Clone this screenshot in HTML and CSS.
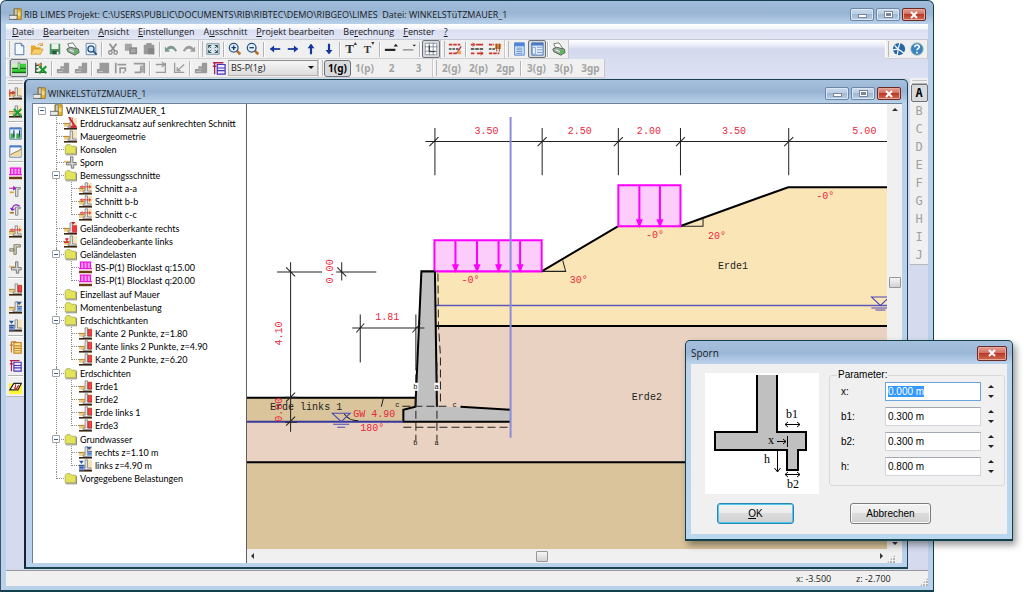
FILE: index.html
```html
<!DOCTYPE html>
<html lang="de">
<head>
<meta charset="utf-8">
<title>RIB LIMES</title>
<link rel="stylesheet" href="styles.css">
</head>
<body>
<svg class="defs" aria-hidden="true">
  <symbol id="app" viewBox="0 0 16 16"><path d="M6 1h9v13H6z" fill="#e9b62c" stroke="#8a6a10"/><path d="M7 1h3v9H7z" fill="#d8d8d8" stroke="#555" stroke-width=".7"/><path d="M0 9h10v5H0z" fill="#e8e8e8" stroke="#555"/><path d="M11 5h3v5h-3z" fill="#f7dc7a"/></symbol>
  <symbol id="new" viewBox="0 0 16 16"><path d="M3.500 1.500h7l3 3v10h-10z" fill="#f4f9ff" stroke="#4a6a96"/><path d="M10.500 1.500v3h3" fill="#cfe0f5" stroke="#4a6a96"/></symbol>
  <symbol id="open" viewBox="0 0 16 16"><path d="M1 4h5l1 2h5v2H5l-3 6H1z" fill="#e8a92a"/><path d="M4 8h11l-3 6H1z" fill="#f7cf6b" stroke="#c98a1a" stroke-width=".7"/><path d="M9 4c1-3 4-3 5 0M14 1v3h-3" fill="none" stroke="#d48a1c"/></symbol>
  <symbol id="save" viewBox="0 0 16 16"><path d="M2 2h12v12H2z" fill="#4b9361"/><path d="M4 2h8v6H4z" fill="#e8f4ea"/><path d="M5 10h7v4H5z" fill="#245c38"/><path d="M10 11h2v3h-2z" fill="#fff"/></symbol>
  <symbol id="print" viewBox="0 0 16 16"><path d="M2 2l6-1 4 6-7 2z" fill="#fff" stroke="#60786a"/><path d="M1 8l4-2 9 2 1 4-5 3-8-4z" fill="#9aaea0" stroke="#43584b"/><circle cx="11" cy="11" r="2.500" fill="#58b858"/><path d="M4 9l5 2" stroke="#fff"/></symbol>
  <symbol id="preview" viewBox="0 0 16 16"><path d="M2.500 1.500h9l2 2v11h-11z" fill="#f2f7fd" stroke="#5c7da6"/><circle cx="8" cy="8" r="3.500" fill="#cfe6fa" stroke="#24527f" stroke-width="1.500"/><path d="M10.500 10.500l4 4" stroke="#24527f" stroke-width="2"/></symbol>
  <symbol id="cut" viewBox="0 0 16 16"><path d="M4 2l6 8M12 2L6 10" stroke="#8f8f8f" stroke-width="2"/><circle cx="5" cy="12" r="2" fill="none" stroke="#8f8f8f" stroke-width="1.500"/><circle cx="11" cy="12" r="2" fill="none" stroke="#8f8f8f" stroke-width="1.500"/></symbol>
  <symbol id="copy" viewBox="0 0 16 16"><path d="M1 2h8v8H1z" fill="#a5a5a5"/><path d="M6 6h9v8H6z" fill="#8f8f8f"/><path d="M8 9h5M8 11h5" stroke="#bbb"/></symbol>
  <symbol id="paste" viewBox="0 0 16 16"><path d="M2 3h12v11H2zM5 1h6v3H5z" fill="#999"/><path d="M7 7h7v7H7z" fill="#858585"/></symbol>
  <symbol id="undo" viewBox="0 0 16 16"><path d="M1 11V5l2 2c4-5 9-3 12 3l-2 1c-3-4-5-4-8-2l2 2z" fill="#7f9a8c"/></symbol>
  <symbol id="redo" viewBox="0 0 16 16"><path d="M15 11V5l-2 2C9 2 4 4 1 10l2 1c3-4 5-4 8-2l-2 2z" fill="#9c9c9c"/></symbol>
  <symbol id="fit" viewBox="0 0 16 16"><path d="M1 2h14v12H1z" fill="#dce9ef" stroke="#6f8a98"/><path d="M6 7L3 4m0 3V4h3M10 7l3-3m0 3V4h-3M6 9l-3 3m0-3v3h3M10 9l3 3m0-3v3h-3" stroke="#1f3a48" fill="none"/></symbol>
  <symbol id="zin" viewBox="0 0 16 16"><path d="M9 9l5 5" stroke="#b9702c" stroke-width="3"/><circle cx="6.500" cy="6.500" r="5" fill="#e4f1fb" stroke="#2b5688" stroke-width="1.500"/><path d="M4 6.500h5M6.500 4v5" stroke="#123c78" stroke-width="1.500"/></symbol>
  <symbol id="zout" viewBox="0 0 16 16"><path d="M9 9l5 5" stroke="#b9702c" stroke-width="3"/><circle cx="6.500" cy="6.500" r="5" fill="#e4f1fb" stroke="#2b5688" stroke-width="1.500"/><path d="M4 6.500h5" stroke="#123c78" stroke-width="1.500"/></symbol>
  <symbol id="left" viewBox="0 0 16 16"><path d="M3 8h11" stroke="#16389c" stroke-width="2"/><path d="M2 8l5-4v8z" fill="#16389c"/></symbol>
  <symbol id="right" viewBox="0 0 16 16"><path d="M2 8h11" stroke="#16389c" stroke-width="2"/><path d="M14 8L9 4v8z" fill="#16389c"/></symbol>
  <symbol id="up" viewBox="0 0 16 16"><path d="M8 3v11" stroke="#16389c" stroke-width="2.500"/><path d="M8 2l4 5H4z" fill="#16389c"/></symbol>
  <symbol id="down" viewBox="0 0 16 16"><path d="M8 2v11" stroke="#16389c" stroke-width="2.500"/><path d="M8 14l4-5H4z" fill="#16389c"/></symbol>
  <symbol id="thick" viewBox="0 0 16 16"><path d="M1 9h12" stroke="#222" stroke-width="2.500"/><path d="M11 5h5l-2.500-3z" fill="#222"/></symbol>
  <symbol id="thin" viewBox="0 0 16 16"><path d="M1 9h12" stroke="#555"/><path d="M12 3h4l-2 2z" fill="#222"/></symbol>
  <symbol id="grid" viewBox="0 0 16 16"><path d="M1.500 1.500h13v13h-13z" fill="#fff" stroke="#8a97a5"/><path d="M1 5.500h14M1 10.500h14M6 1v14M10.500 1v14" stroke="#7c8894"/><path d="M6 4v7h7" fill="none" stroke="#222"/></symbol>
  <symbol id="red1" viewBox="0 0 16 16"><path d="M1 3h13M1 13h9" stroke="#c8372d" stroke-width="2" stroke-dasharray="4 1"/><path d="M1 8h12" stroke="#444" stroke-width="1.500" stroke-dasharray="3 1"/><path d="M10 13l5-8" stroke="#a33" stroke-width="1.500"/><path d="M11 10h4v4h-4z" fill="#e9a05a"/></symbol>
  <symbol id="red2" viewBox="0 0 16 16"><path d="M1 3h4M7 3h8M1 13h4M8 13h7" stroke="#c8372d" stroke-width="2"/><path d="M1 8h14" stroke="#333" stroke-width="1.500" stroke-dasharray="4 1"/><path d="M3 1l3 2-3 2M12 11l3 2-3 2" fill="none" stroke="#c33"/></symbol>
  <symbol id="red3" viewBox="0 0 16 16"><path d="M1 3h6M1 13h12" stroke="#c8372d" stroke-width="2" stroke-dasharray="4 1"/><path d="M1 8h8" stroke="#444" stroke-width="1.500" stroke-dasharray="3 1"/><path d="M8 2h7v6H8z" fill="#d88d3c"/><path d="M10 2v9M13 2v9" stroke="#8a3a1c"/></symbol>
  <symbol id="list" viewBox="0 0 16 16"><path d="M3 1h11v14H3z" fill="#e2eefc" stroke="#3f74c6"/><path d="M3 1h11v4H3z" fill="#4f86da"/><path d="M5 7h7M5 9h7M5 11h7M5 13h7" stroke="#5b87c5"/></symbol>
  <symbol id="list2" viewBox="0 0 16 16"><path d="M2 1h13v14H2z" fill="#e2eefc" stroke="#3f6ab0"/><path d="M2 1h13v3H2z" fill="#4a78c4"/><path d="M3 6h3v8H3zM8 6h6M8 9h6M8 12h6" fill="#fff" stroke="#7196c8"/></symbol>
  <symbol id="globe" viewBox="0 0 16 16"><circle cx="8" cy="8" r="7" fill="#2566a4"/><path d="M9 1L7 8l7 5M7 8L1 9M3 4l4 4M7 9l-1 6" stroke="#eef6ff" stroke-width="1.500" fill="none"/></symbol>
  <symbol id="help" viewBox="0 0 16 16"><circle cx="8" cy="8" r="7" fill="#3b82c0" stroke="#8aa"/><path d="M5.500 6c0-4 5.500-3 5 0-.3 1.500-2.500 1.500-2.500 3.500M8 11v2" fill="none" stroke="#fff" stroke-width="1.800"/></symbol>
  <symbol id="ground" viewBox="0 0 16 16"><path d="M0 8h16v6H0zM9 3h7v6H9z" fill="#3ccf38"/><path d="M0 3h7v5H0z" fill="#c8f2c0"/><path d="M0 8.500h7M9 8.500h7M0 13h16" stroke="#166516" stroke-width="1.500"/><path d="M7 2h2v8H7z" fill="#e8ffe4" stroke="#1b7a1a" stroke-width=".7"/></symbol>
  <symbol id="gdel" viewBox="0 0 16 16"><path d="M1 13h13M2 2v11M2 5h4M2 9h3M8 2v6" stroke="#3d4b3d" stroke-width="1.500"/><path d="M6 6l8 8M14 6l-8 8" stroke="#1d9b28" stroke-width="2.500"/><path d="M4 4h4" stroke="#e08030" stroke-width="2"/></symbol>
  <symbol id="gray1" viewBox="0 0 16 16"><path d="M1 14V9h4V6h4V2h6v12z" fill="#9a9a9a"/><path d="M3 12h5M6 9h3" stroke="#c9c9c9"/></symbol>
  <symbol id="gray0" viewBox="0 0 16 16"><path d="M1 14V9h3V2h11v12z" fill="#9a9a9a"/><path d="M3 12h5" stroke="#c9c9c9"/></symbol>
  <symbol id="gray2" viewBox="0 0 16 16"><path d="M2 14V2M4 4h10M7 7v7M7 8h6v4M11 12v2" fill="none" stroke="#999" stroke-width="2"/></symbol>
  <symbol id="gray3" viewBox="0 0 16 16"><path d="M2 3h12v11M3 13h7V6" fill="none" stroke="#999" stroke-width="2"/><path d="M10 5h4v8h-4z" fill="#aaa"/></symbol>
  <symbol id="gray4" viewBox="0 0 16 16"><path d="M2 4h9M9 1l3 3-3 3M13 2v11H2" fill="none" stroke="#999" stroke-width="1.500"/></symbol>
  <symbol id="gray5" viewBox="0 0 16 16"><path d="M3 2v11h11M14 4l-8 7M6 7v4h4" fill="none" stroke="#999" stroke-width="1.500"/></symbol>
  <symbol id="tab" viewBox="0 0 16 16"><path d="M6 4h9v11H6zM6 8h9M6 11h9" fill="#ece9ff" stroke="#4a35b0" stroke-width="1.400"/><path d="M1 2h12M3 2v13M1 6h4" stroke="#b02058" stroke-width="1.500"/></symbol>
  <symbol id="wall" viewBox="0 0 16 16"><path d="M10 1h6v12h-6z" fill="#f6e3b8"/><path d="M0 8h8v4H0z" fill="#f0cf86"/><path d="M0 8h7" stroke="#b98a30" stroke-width="1.500"/><path d="M7.500 1h3v10H15v2H5v-2h2.500z" fill="#e2e2e2" stroke="#777" stroke-width=".9"/><path d="M0 14.500h16" stroke="#3a2410" stroke-width="2"/></symbol>
  <symbol id="press" viewBox="0 0 16 16"><use href="#wall"/><path d="M6 0l8 12H8" fill="none" stroke="#d8202a" stroke-width="2.200"/></symbol>
  <symbol id="spur" viewBox="0 0 16 16"><path d="M0 6h7v2H0z" fill="#e0b860"/><path d="M8 1h3v7h4v3h-3v4H9v-4H3V8h5z" fill="#d0d0d0" stroke="#666"/></symbol>
  <symbol id="folder" viewBox="0 0 16 16"><path d="M1.500 4l2-2h4l2 2h5v9h-13z" fill="#e2e456" stroke="#a8a860"/><path d="M2 14.500h13.500V5" fill="none" stroke="#6c6c50"/></symbol>
  <symbol id="cutsec" viewBox="0 0 16 16"><use href="#wall"/><path d="M1 6h14" stroke="#e0312c" stroke-width="1.800" stroke-dasharray="3 1"/><path d="M4 4v4M13 4v4" stroke="#e0312c"/></symbol>
  <symbol id="topr" viewBox="0 0 16 16"><use href="#wall"/><path d="M10 4h6v9h-6z" fill="#ee3540"/><path d="M9 0h5l-2.500 3z" fill="#d01420"/></symbol>
  <symbol id="topl" viewBox="0 0 16 16"><use href="#wall"/><path d="M1 4h5L3.500 8z" fill="#d8202a"/><path d="M0 9h6" stroke="#d8202a" stroke-width="1.500"/></symbol>
  <symbol id="load" viewBox="0 0 16 16"><path d="M1 1h14v8H1z" fill="#ff9cff"/><path d="M1 1.500h14M2 1v8M6 1v8M10 1v8M14 1v8M0 9.500h16" stroke="#e81ad8" stroke-width="1.600"/><path d="M0 13.500h16" stroke="#6a3c14" stroke-width="3"/></symbol>
  <symbol id="layer" viewBox="0 0 16 16"><use href="#wall"/><path d="M11 3h5v8h-5z" fill="#f04444" stroke="#a82020" stroke-width=".7"/></symbol>
  <symbol id="water" viewBox="0 0 16 16"><use href="#wall"/><path d="M10 6h6v7h-6z" fill="#8caedb"/><path d="M9 1h7l-3.500 4z" fill="#2f58a4"/><path d="M10 7h6M11 9.500h4" stroke="#2f58a4"/></symbol>
  <symbol id="waterl" viewBox="0 0 16 16"><use href="#wall"/><path d="M0 7h7v7H0z" fill="#7090cc"/><path d="M0 2h6L3 6z" fill="#2f58a4"/><path d="M0 8h6M1 10.500h4" stroke="#24468c"/></symbol>
  <symbol id="s1" viewBox="0 0 16 16"><use href="#wall"/><path d="M1 3v9M1 7h6M4 5l3 2-3 2" fill="none" stroke="#d83a28" stroke-width="1.400"/></symbol>
  <symbol id="s2" viewBox="0 0 16 16"><use href="#wall"/><path d="M6 5l9 9M15 5l-9 9" stroke="#14a02c" stroke-width="2.500"/></symbol>
  <symbol id="s3" viewBox="0 0 16 16"><path d="M1 1h14v14H1z" fill="#e9f5ff" stroke="#3d68a8"/><path d="M1 2h14" stroke="#4b7ccc" stroke-width="2"/><path d="M2 8h5v6H2zM9 8h5v6H9z" fill="#49aa4b"/><path d="M6 4v8M13 4v8" stroke="#1f4a78" stroke-width="1.500"/></symbol>
  <symbol id="s4" viewBox="0 0 16 16"><path d="M1 1h14v14H1z" fill="#f4f9ff" stroke="#3d68a8"/><path d="M1 2h14" stroke="#4b7ccc" stroke-width="2"/><path d="M2 12l5-3 3-1 5-3v9H2z" fill="#f3dca4"/><path d="M2 12l5-3 3-1 5-3" fill="none" stroke="#87641c"/></symbol>
  <symbol id="s5" viewBox="0 0 16 16"><path d="M8 3h6v2h-3v9H8z" fill="#ddd" stroke="#777"/><path d="M0 4h8M5 2l3 2-3 2" stroke="#a022b0" fill="none" stroke-width="1.500"/><path d="M1 9h5" stroke="#d8a030" stroke-width="2"/></symbol>
  <symbol id="s6" viewBox="0 0 16 16"><path d="M8 5h6v2h-3v8H8z" fill="#ddd" stroke="#777"/><path d="M4 9c0-7 5-8 9-5M4 9L2 6M4 9l3-2" stroke="#8a22c0" fill="none" stroke-width="1.500"/><path d="M1 12h5" stroke="#a87020" stroke-width="2"/></symbol>
  <symbol id="s7" viewBox="0 0 16 16"><path d="M6 2h8v3H9v9H6zM1 7h5v3H1z" fill="#cfcab5" stroke="#787460"/></symbol>
  <symbol id="s8" viewBox="0 0 16 16"><path d="M6 2h9v13H6zM6 6h9M6 9h9M6 12h9" fill="#ffe9a8" stroke="#c88418" stroke-width="1.400"/><path d="M1 5h4M3 1v13M3 1h6" stroke="#c87828" stroke-width="1.500"/></symbol>
  <symbol id="s9" viewBox="0 0 16 16"><path d="M0 3h16v13H0z" fill="#fdf534"/><path d="M1 11L6 3h9l-4 8z" fill="#fff" stroke="#222" stroke-width="1.500"/><path d="M8 4v4M6 8l3 2 3-5" fill="none" stroke="#c33024" stroke-width="1.500"/></symbol>
</svg>

<main class="app">
  <header class="titlebar">
    <svg class="ico"><use href="#app"/></svg>
    <h1 class="caption">RIB LIMES Projekt: C:\USERS\PUBLIC\DOCUMENTS\RIB\RIBTEC\DEMO\RIBGEO\LIMES&nbsp; Datei: WINKELSTüTZMAUER_1</h1>
    <div class="winbtns">
      <button class="win" aria-label="Minimieren"><i class="min"></i></button>
      <button class="win" aria-label="Maximieren"><i class="max"></i></button>
      <button class="win close" aria-label="Schließen"><svg viewBox="0 0 10 8"><path d="M2 1l6 6M8 1L2 7"/></svg></button>
    </div>
  </header>
  <div class="client">
    <nav class="menu">
      <button><u>D</u>atei</button><button><u>B</u>earbeiten</button><button><u>A</u>nsicht</button><button><u>E</u>instellungen</button><button>A<u>u</u>sschnitt</button><button><u>P</u>rojekt bearbeiten</button><button>Be<u>r</u>echnung</button><button><u>F</u>enster</button><button><u>?</u></button>
    </nav>
    <div class="bars">
      <div class="bar">
        <div class="group"><span class="grip"></span>
          <button class="tb" aria-label="Neu"><svg><use href="#new"/></svg></button><button class="tb" aria-label="Öffnen"><svg><use href="#open"/></svg></button><button class="tb" aria-label="Speichern"><svg><use href="#save"/></svg></button><button class="tb" aria-label="Drucken"><svg><use href="#print"/></svg></button><button class="tb" aria-label="Vorschau"><svg><use href="#preview"/></svg></button><span class="sep"></span>
          <button class="tb" aria-label="Ausschneiden"><svg><use href="#cut"/></svg></button><button class="tb" aria-label="Kopieren"><svg><use href="#copy"/></svg></button><button class="tb" aria-label="Einfügen"><svg><use href="#paste"/></svg></button><span class="sep"></span>
          <button class="tb" aria-label="Rückgängig"><svg><use href="#undo"/></svg></button><button class="tb" aria-label="Wiederholen"><svg><use href="#redo"/></svg></button></div>
        <div class="group"><span class="grip"></span>
          <button class="tb" aria-label="Alles zeigen"><svg><use href="#fit"/></svg></button><span class="sep"></span>
          <button class="tb" aria-label="Vergrößern"><svg><use href="#zin"/></svg></button><button class="tb" aria-label="Verkleinern"><svg><use href="#zout"/></svg></button><span class="sep"></span>
          <button class="tb" aria-label="Links"><svg><use href="#left"/></svg></button><button class="tb" aria-label="Rechts"><svg><use href="#right"/></svg></button><button class="tb" aria-label="Hoch"><svg><use href="#up"/></svg></button><button class="tb" aria-label="Runter"><svg><use href="#down"/></svg></button><span class="sep"></span>
          <button class="tb font big">T<sup>▴</sup></button><button class="tb font">T<sup>▾</sup></button><span class="sep"></span>
          <button class="tb" aria-label="Dicker"><svg><use href="#thick"/></svg></button><button class="tb" aria-label="Dünner"><svg><use href="#thin"/></svg></button><span class="sep"></span>
          <button class="tb on" aria-label="Raster"><svg><use href="#grid"/></svg></button></div>
        <div class="group"><span class="grip"></span>
          <button class="tb" aria-label="Maßkette"><svg><use href="#red1"/></svg></button><span class="sep"></span><button class="tb" aria-label="Bemaßung"><svg><use href="#red2"/></svg></button><button class="tb" aria-label="Bemaßung Wand"><svg><use href="#red3"/></svg></button></div>
        <div class="group"><span class="grip"></span>
          <button class="tb" aria-label="Liste"><svg><use href="#list"/></svg></button><button class="tb on" aria-label="Baum"><svg><use href="#list2"/></svg></button><span class="sep"></span><button class="tb" aria-label="Ausgabe"><svg><use href="#print"/></svg></button></div>
        <div class="group last"><span class="grip"></span>
          <button class="tb" aria-label="RIB"><svg><use href="#globe"/></svg></button><button class="tb" aria-label="Hilfe"><svg><use href="#help"/></svg></button></div>
      </div>
      <div class="bar">
        <div class="group"><span class="grip"></span>
          <button class="tb on" aria-label="Gelände"><svg><use href="#ground"/></svg></button><span class="sep blank"></span><button class="tb" aria-label="Löschen"><svg><use href="#gdel"/></svg></button><span class="sep"></span>
          <button class="tb" aria-label="Stufe"><svg><use href="#gray1"/></svg></button><button class="tb" aria-label="Stufe 2"><svg><use href="#gray1"/></svg></button><span class="sep"></span>
          <button class="tb" aria-label="Block"><svg><use href="#gray0"/></svg></button><button class="tb" aria-label="Rahmen"><svg><use href="#gray2"/></svg></button><button class="tb" aria-label="Ecke"><svg><use href="#gray3"/></svg></button><span class="sep"></span>
          <button class="tb" aria-label="Pfeil"><svg><use href="#gray4"/></svg></button><button class="tb" aria-label="Winkel"><svg><use href="#gray5"/></svg></button><span class="sep"></span>
          <button class="tb" aria-label="Profil"><svg><use href="#gray1"/></svg></button><button class="tb" aria-label="Tabelle"><svg><use href="#tab"/></svg></button>
          <span class="combo"><select aria-label="Bemessungssituation"><option>BS-P(1g)</option></select></span></div>
        <div class="group"><span class="grip"></span>
          <button class="num on">1(g)</button><button class="num">1(p)</button><button class="num">2</button><button class="num">3</button></div>
        <div class="group"><span class="grip"></span>
          <button class="num">2(g)</button><button class="num">2(p)</button><button class="num">2gp</button><span class="sep"></span><button class="num">3(g)</button><button class="num">3(p)</button><button class="num">3gp</button></div>
      </div>
    </div>
    <div class="work">
      <div class="side">
        <span class="hgrip"></span>
        <button class="tb" aria-label="Schnitt"><svg><use href="#s1"/></svg></button><button class="tb" aria-label="Entfernen"><svg><use href="#s2"/></svg></button><span class="hsep"></span>
        <button class="tb" aria-label="Erdkeil"><svg><use href="#s3"/></svg></button><button class="tb" aria-label="Böschung"><svg><use href="#s4"/></svg></button><span class="hsep"></span>
        <button class="tb" aria-label="Blocklast"><svg><use href="#load"/></svg></button><button class="tb" aria-label="Einzellast"><svg><use href="#s5"/></svg></button><button class="tb" aria-label="Moment"><svg><use href="#s6"/></svg></button><span class="hsep"></span>
        <button class="tb" aria-label="Bemessungsschnitt"><svg><use href="#cutsec"/></svg></button><button class="tb" aria-label="Konsole"><svg><use href="#s7"/></svg></button><button class="tb" aria-label="Sporn"><svg><use href="#spur"/></svg></button><span class="hsep"></span>
        <button class="tb" aria-label="Erdschicht"><svg><use href="#layer"/></svg></button><button class="tb" aria-label="Wasser rechts"><svg><use href="#water"/></svg></button><button class="tb" aria-label="Wasser links"><svg><use href="#waterl"/></svg></button><span class="hsep"></span>
        <button class="tb" aria-label="Tabelle Boden"><svg><use href="#s8"/></svg></button><button class="tb" aria-label="Tabelle Lasten"><svg><use href="#tab"/></svg></button><span class="hsep"></span>
        <button class="tb" aria-label="Bearbeiten"><svg><use href="#s9"/></svg></button>
      </div>

      <section class="child">
        <header class="titlebar inner">
          <svg class="ico"><use href="#app"/></svg>
          <h2 class="caption">WINKELSTüTZMAUER_1</h2>
          <div class="winbtns">
            <button class="win" aria-label="Minimieren"><i class="min"></i></button>
            <button class="win" aria-label="Maximieren"><i class="max"></i></button>
            <button class="win close" aria-label="Schließen"><svg viewBox="0 0 10 8"><path d="M2 1l6 6M8 1L2 7"/></svg></button>
          </div>
        </header>
        <div class="panes">
          <div class="tree">
            <div class="row root"><button class="toggle" aria-label="Zuklappen"></button><svg><use href="#app"/></svg>WINKELSTüTZMAUER_1</div>
            <ul>
              <li><div class="row"><svg><use href="#press"/></svg>Erddruckansatz auf senkrechten Schnitt</div></li>
              <li><div class="row"><svg><use href="#wall"/></svg>Mauergeometrie</div></li>
              <li><div class="row"><svg><use href="#folder"/></svg>Konsolen</div></li>
              <li><div class="row"><svg><use href="#spur"/></svg>Sporn</div></li>
              <li><div class="row"><button class="toggle" aria-label="Zuklappen"></button><svg><use href="#folder"/></svg>Bemessungsschnitte</div>
                <ul>
                  <li><div class="row"><svg><use href="#cutsec"/></svg>Schnitt a-a</div></li>
                  <li><div class="row"><svg><use href="#cutsec"/></svg>Schnitt b-b</div></li>
                  <li><div class="row"><svg><use href="#cutsec"/></svg>Schnitt c-c</div></li>
                </ul></li>
              <li><div class="row"><svg><use href="#topr"/></svg>Geländeoberkante rechts</div></li>
              <li><div class="row"><svg><use href="#topl"/></svg>Geländeoberkante links</div></li>
              <li><div class="row"><button class="toggle" aria-label="Zuklappen"></button><svg><use href="#folder"/></svg>Geländelasten</div>
                <ul>
                  <li><div class="row"><svg><use href="#load"/></svg>BS-P(1) Blocklast q:15.00</div></li>
                  <li><div class="row"><svg><use href="#load"/></svg>BS-P(1) Blocklast q:20.00</div></li>
                </ul></li>
              <li><div class="row"><svg><use href="#folder"/></svg>Einzellast auf Mauer</div></li>
              <li><div class="row"><svg><use href="#folder"/></svg>Momentenbelastung</div></li>
              <li><div class="row"><button class="toggle" aria-label="Zuklappen"></button><svg><use href="#folder"/></svg>Erdschichtkanten</div>
                <ul>
                  <li><div class="row"><svg><use href="#layer"/></svg>Kante 2 Punkte, z=1.80</div></li>
                  <li><div class="row"><svg><use href="#layer"/></svg>Kante links 2 Punkte, z=4.90</div></li>
                  <li><div class="row"><svg><use href="#layer"/></svg>Kante 2 Punkte, z=6.20</div></li>
                </ul></li>
              <li><div class="row"><button class="toggle" aria-label="Zuklappen"></button><svg><use href="#folder"/></svg>Erdschichten</div>
                <ul>
                  <li><div class="row"><svg><use href="#layer"/></svg>Erde1</div></li>
                  <li><div class="row"><svg><use href="#layer"/></svg>Erde2</div></li>
                  <li><div class="row"><svg><use href="#layer"/></svg>Erde links 1</div></li>
                  <li><div class="row"><svg><use href="#layer"/></svg>Erde3</div></li>
                </ul></li>
              <li><div class="row"><button class="toggle" aria-label="Zuklappen"></button><svg><use href="#folder"/></svg>Grundwasser</div>
                <ul class="flush">
                  <li><div class="row"><svg><use href="#water"/></svg>rechts z=1.10 m</div></li>
                  <li><div class="row"><svg><use href="#waterl"/></svg>links z=4.90 m</div></li>
                </ul></li>
              <li><div class="row"><svg><use href="#folder"/></svg>Vorgegebene Belastungen</div></li>
            </ul>
          </div>
          <div class="view">
            <svg class="drawing" viewBox="247 104 640 444" preserveAspectRatio="xMinYMin slice">
              <path d="M434 271H541L617 226H679L787 187H887V325H434z" fill="#fae5b7"/>
              <path d="M435 325H887V461H247V421H435z" fill="#e9d2c1"/>
              <path d="M247 461H900V570H247zM247 397H415V421H247z" fill="#d9c49b"/>
              <path d="M434 305H887" stroke="#5a5aba" stroke-width="1.500"/>
              <g class="edge"><path d="M541 271L617 226M679 226L787 187H887M435 325.500H887M247 461.500H887M247 397H415"/></g>
              <g class="load"><path d="M434 240H541V271H434zM617.500 185H679.500V226H617.500z" fill="#fcccfb"/>
                <path d="M455 240V268M476.500 240V268M498 240V268M519.500 240V268M638.500 185V223M659 185V223"/>
                <path d="M453 265h4l-2 5zM474.500 265h4l-2 5zM496 265h4l-2 5zM517.500 265h4l-2 5zM636.500 220h4l-2 5zM657 220h4l-2 5z" fill="#f0f"/></g>
              <path d="M421 271H434L436.500 406 460 406.500 510 409V421H403V409L415 406z" fill="#c0c0c0"/>
              <g class="edge"><path d="M434 271H421L415 406 403 409V421H510M434.500 271L436.500 406M460 406L510 409"/></g>
              <path d="M247 421H403" stroke="#38389c" stroke-width="2"/>
              <g class="dim">
                <path d="M425 141.500H887M434.500 128V175M541.500 128V175M617.500 128V175M679.500 128V175M787.500 128V175"/>
                <path d="M429 146l9-9M537 146l9-9M613 146l9-9M675 146l9-9M783 146l9-9"/>
                <path d="M290.500 262V431M277 271.500H322M336 271.500H376M341.500 262V280M286 267l9 9M337 267l9 9M286 401l9-9M286 425l9-9M285 421.500h12M285 396.500h12"/>
                <path d="M352 327.500H424M360 314V362M415.500 314V362M356 332l8-9M412 332l8-9"/>
                <path d="M541 271H565L562 260M680 226H702V218M383 398L381 406M344 413c3 5 7 7 14 7"/>
              </g>
              <g class="dash"><path d="M437.500 273L438 325 440 355V403M403 426.500H510M402 405.500H450M415.500 362V440M436.500 362V440"/></g>
              <g class="water"><path d="M332 412.500H350L341 421zM333 423.500H349M337 426.500H345M870 296.500H888L879 305zM870 307.500H888M874 309.500H884"/></g>
              <path d="M510 117V437" stroke="#8c8cdc" stroke-width="2"/>
              <g class="red">
                <text x="474" y="134">3.50</text><text x="567" y="134">2.50</text><text x="636" y="134">2.00</text><text x="721" y="134">3.50</text><text x="851" y="134">5.00</text>
                <text x="375" y="320">1.81</text><text x="353" y="416">GW 4.90</text><text x="360" y="430">180°</text>
                <text x="461" y="283">-0°</text><text x="569" y="283">30°</text><text x="645" y="238">-0°</text><text x="707" y="239">20°</text><text x="815" y="199">-0°</text>
                <text transform="translate(333 283) rotate(-90)">0.00</text><text transform="translate(282 345) rotate(-90)">4.10</text><text transform="translate(282 421) rotate(-90)">0.80</text>
              </g>
              <g class="name"><text x="717" y="269">Erde1</text><text x="631" y="399">Erde2</text><text x="270" y="409">Erde links 1</text></g>
              <path d="M412 382h6v8h-6zM434 382h5v8h-5z" fill="#fff"/>
              <g class="tag"><text x="413" y="388">b</text><text x="434" y="388">a</text><text x="413" y="444">b</text><text x="434" y="444">a</text><text x="395" y="406">c</text><text x="452" y="406">c</text></g>
            </svg>
            <div class="vscroll"><span class="arrow up"></span><span class="thumb"></span><span class="arrow down"></span></div>
            <div class="hscroll"><span class="arrow back"></span><span class="thumb"></span><span class="arrow fwd"></span></div>
            <span class="sizer"></span>
          </div>
        </div>
      </section>

      <div class="side letters">
        <span class="hgrip"></span>
        <button class="tb on">A</button><button class="tb">B</button><button class="tb">C</button><button class="tb">D</button><button class="tb">E</button><button class="tb">F</button><button class="tb">G</button><button class="tb">H</button><button class="tb">I</button><button class="tb">J</button>
      </div>
    </div>
    <footer class="status"><span>x: -3.500</span><span>z: -2.700</span><span class="sizer"></span></footer>
  </div>
</main>

<div class="dialog" role="dialog" aria-labelledby="dlg">
  <header class="titlebar dlgbar">
    <h2 class="caption" id="dlg">Sporn</h2>
    <div class="winbtns"><button class="win close wide" aria-label="Schließen"><svg viewBox="0 0 10 8"><path d="M2 1l6 6M8 1L2 7"/></svg></button></div>
  </header>
  <form class="dlgbody">
    <div class="fields">
      <svg class="figure" viewBox="0 0 114 121">
        <path d="M52 2V59H10V77H82V97H93V77H101V59H72V2z" fill="#c0c0c0"/>
        <path d="M52 2V59H10V77H82V97H93V77H101V59H72V2" fill="none" stroke="#000" stroke-width="2"/>
        <path d="M80 51.500H95M83 49l-3 2.500 3 2.500M92 49l3 2.500-3 2.500M72 68.500H81M78 66l3 2.500-3 2.500M82.500 63V74M72.500 78V98M69.500 95l3 4 3-4M80 101.500H95M83 99l-3 2.500 3 2.500M92 99l3 2.500-3 2.500" fill="none" stroke="#000"/>
        <text x="81" y="45">b1</text><text x="63" y="71">x</text><text x="59" y="90">h</text><text x="82" y="115">b2</text>
      </svg>
      <fieldset class="params">
        <legend>Parameter:</legend>
        <label for="fx">x:</label><input id="fx" value="0.000 m"><span class="spin"><button type="button" aria-label="mehr"></button><button type="button" aria-label="weniger"></button></span>
        <label for="fb1">b1:</label><input id="fb1" value="0.300 m"><span class="spin"><button type="button" aria-label="mehr"></button><button type="button" aria-label="weniger"></button></span>
        <label for="fb2">b2:</label><input id="fb2" value="0.300 m"><span class="spin"><button type="button" aria-label="mehr"></button><button type="button" aria-label="weniger"></button></span>
        <label for="fh">h:</label><input id="fh" value="0.800 m"><span class="spin"><button type="button" aria-label="mehr"></button><button type="button" aria-label="weniger"></button></span>
      </fieldset>
    </div>
    <div class="actions"><button type="button" class="push default"><u>O</u>K</button><button type="button" class="push">Abbrechen</button></div>
  </form>
</div>
<script src="script.js"></script>
</body>
</html>
```
FILE: styles.css
```css
* { box-sizing: border-box; }
body { margin: 0; height: 100vh; background: #fff; font: 9px/12px "Open Sans", "Noto Sans", sans-serif; color: #1a1a1a; overflow: hidden; position: relative; }
button, input, select { font: inherit; color: inherit; margin: 0; padding: 0; border: 0; background: none; }
.defs { display: none; }
h1, h2 { margin: 0; font: inherit; }

/* windows */
.app { height: 100%; margin-right: 90px; display: flex; flex-direction: column; padding: 0 5px 4px 5px; border: 1px solid #12404c; border-left-color: #405066; border-bottom-width: 2px; border-radius: 6px 6px 0 0; background: linear-gradient(#a2bddb, #98b4d3 12px, #b9d1ea 23px, #b9d1ea); }
.titlebar { flex: none; display: flex; align-items: center; height: 23px; padding: 4px 2px 0 3px; gap: 2px; }
.ico { width: 13px; height: 13px; flex: none; }
.caption { flex: 1; white-space: nowrap; font-size: 9px; line-height: 14px; }
.winbtns { display: flex; gap: 2px; align-items: center; }
.win { width: 24px; height: 13px; display: flex; align-items: center; justify-content: center; border: 1px solid #6c86a6; border-radius: 2px; background: linear-gradient(#cddcee, #b6cbe2 50%, #9fb9d5 50%, #b6cde6); box-shadow: inset 0 0 0 1px #dbe7f4; }
.win.close { border-color: #6b2a26; background: linear-gradient(#e3a197, #d2685a 50%, #b93a28 50%, #cf6a50); box-shadow: inset 0 0 0 1px #e6a99c; }
.win svg { width: 10px; height: 8px; fill: none; stroke: #fff; stroke-width: 2; }
.win.wide { width: 30px; height: 15px; }
.min { width: 9px; height: 4px; border: 1px solid #7b8798; background: #fff; margin-top: 3px; }
.max { width: 7px; height: 5px; border: 1px solid #fff; outline: 1px solid #7b8798; background: #7b8798; }
.client { flex: 1; min-height: 0; display: flex; flex-direction: column; background: #d5daee; }

/* menu and toolbars */
.menu { flex: none; display: flex; gap: 9px; height: 16px; padding-left: 6px; background: linear-gradient(#fff, #f4f5fb 5px, #d9def1 6px, #e2e6f5); border-bottom: 1px solid #c3c7cf; }
.menu button { white-space: nowrap; }
.menu u { text-underline-offset: 1px; }
.bars { flex: none; display: flex; flex-direction: column; background: linear-gradient(#fff, #eceef8 5px, #d4d9ed 9px, #dce1f3); }
.bar { display: flex; height: 19px; }
.group { display: flex; align-items: center; background: #f0f0f0; border-bottom: 1px solid #d0d0d4; border-right: 1px solid #c8c8cc; }
.group.last { margin-left: auto; padding-right: 1px; }
.grip { width: 4px; height: 16px; border-left: 1px solid #fff; border-right: 1px solid #b8b8b8; margin-right: 1px; }
.group:first-child .grip { margin-right: 0; }
.sep { width: 4px; height: 15px; flex: none; background: linear-gradient(90deg, transparent 1px, #b4b4b4 1px, #b4b4b4 2px, #fff 2px, #fff 3px, transparent 3px); }
.sep.blank { background: none; }
.tb { width: 18px; height: 18px; flex: none; display: flex; align-items: center; justify-content: center; border-radius: 2px; }
.tb svg { width: 14px; height: 14px; }
.side .tb svg { width: 13px; height: 13px; }
.tb.on, .num.on { border: 1px solid #6e737b; background: #d9dadc; }
.font { font: bold 11px/14px "Liberation Serif", serif; color: #333; }
.font.big { font-size: 13px; }
.font sup { font: 6px/6px "DejaVu Sans", sans-serif; align-self: flex-start; }
.num { width: 27px; height: 17px; font: bold 10px/14px "Noto Sans", sans-serif; color: #a3a3a3; border-radius: 3px; }
.num.on { color: #000; }
.combo { position: relative; width: 90px; height: 16px; }
.combo select { appearance: none; width: 100%; height: 100%; padding: 0 2px; border: 1px solid #b5b5b5; border-top-color: #8d8d8d; background: linear-gradient(#f6f6f6, #dcdcdc); }
.combo::after { content: ""; position: absolute; right: 4px; top: 6px; border: 3px solid transparent; border-top-color: #111; border-bottom: 0; }

/* work area */
.work { flex: 1; min-height: 0; display: flex; }
.side { flex: none; align-self: flex-start; width: 18px; display: flex; flex-direction: column; align-items: center; background: #f0f0f0; border-bottom: 1px solid #b8b8bc; }
.hgrip { width: 15px; height: 4px; margin-top: 2px; border-top: 1px solid #c4c4c4; border-bottom: 1px solid #b4b4b4; }
.hsep { width: 15px; height: 4px; background: linear-gradient(transparent 1px, #b4b4b4 1px, #b4b4b4 2px, #fff 2px, #fff 3px, transparent 3px); }
.letters { margin-left: 2px; }
.letters .tb { font: 12px/14px "DejaVu Sans Mono", monospace; color: #a0a0a0; width: 17px; }
.letters .tb.on { color: #000; font-weight: bold; }
.child { flex: 1; min-width: 0; margin: 1px 0; display: flex; flex-direction: column; padding: 0 5px 4px 6px; border: 1px solid #174450; border-left: 2px solid #14242f; border-bottom-width: 2px; border-radius: 5px 5px 0 0; background: linear-gradient(#a6c0dd, #98b4d3 12px, #b9d1ea 23px, #b9d1ea); }
.inner { padding-left: 1px; padding-right: 1px; }
.panes { flex: 1; min-height: 0; display: flex; border: 1px solid #6d7f95; border-right: 0; border-bottom: 0; background: #fff; }
.view { flex: 1; min-width: 0; display: grid; grid-template: minmax(0, 1fr) 14px / minmax(0, 1fr) 15px; border-left: 1px solid #5f5f5f; background: #f0f0f0; }
.drawing { width: 100%; height: 100%; background: #fff; display: block; }
.vscroll, .hscroll { display: flex; align-items: center; justify-content: space-between; background: #f0f0f0; }
.vscroll { flex-direction: column; padding: 4px 0; }
.hscroll { padding: 0 4px; }
.thumb { width: 12px; height: 11px; border: 1px solid #979797; border-radius: 1px; background: linear-gradient(#f5f5f5, #d2d2d6); }
.vscroll .thumb { margin-bottom: 88px; }
.hscroll .thumb { margin-right: 50px; }
.arrow { border: 3px solid transparent; }
.arrow.up { border-bottom-color: #333; border-top: 0; }
.arrow.down { border-top-color: #333; border-bottom: 0; }
.arrow.back { border-right-color: #333; border-left: 0; }
.arrow.fwd { border-left-color: #333; border-right: 0; }
.sizer { width: 8px; height: 8px; align-self: end; background: radial-gradient(circle at 1px 1px, #b4b4b4 1px, transparent 1px) 0 0 / 3px 3px; clip-path: polygon(100% 0, 100% 100%, 0 100%); }
.status { flex: none; display: flex; align-items: center; justify-content: flex-end; height: 16px; background: #f0f0f0; border-top: 1px solid #98989c; }
.status span { padding: 0 4px; width: 60px; }
.status .sizer { width: 8px; padding: 0; margin-left: 8px; }

/* tree */
.tree { flex: none; width: 213px; background: #fff; font: 9px/13px "Lato", sans-serif; color: #000; overflow: hidden; white-space: nowrap; }
.tree ul { list-style: none; margin: 0; padding: 0; }
.tree > ul { margin-left: 23px; }
.tree li ul { margin-left: 7px; padding-bottom: 1px; }
.tree li .flush { padding-bottom: 0; }
.tree li { position: relative; padding-left: 8px; }
.tree li::before { content: ""; position: absolute; left: 0; top: 0; bottom: 0; border-left: 1px dotted #8c8c8c; }
.tree li:last-child::before { bottom: auto; height: 7px; }
.tree li > .row::before { content: ""; position: absolute; left: 1px; top: 6px; width: 7px; border-top: 1px dotted #8c8c8c; }
.row { display: flex; align-items: center; gap: 3px; height: 13px; }
.row svg { width: 13px; height: 13px; flex: none; }
.root { padding-left: 5px; }
.toggle { width: 8px; height: 8px; flex: none; border: 1px solid #9aa2ad; border-radius: 1px; background: linear-gradient(#46588a, #46588a) center / 4px 1px no-repeat #fff; }
.root .toggle { margin-right: 1px; }
li .toggle { position: absolute; left: -4px; top: 2px; }

/* section drawing */
.edge { fill: none; stroke: #000; stroke-width: 2; }
.load { fill: none; stroke: #f0f; stroke-width: 2; }
.dim { fill: none; stroke: #222; stroke-width: 1; }
.dash { fill: none; stroke: #222; stroke-width: 1; stroke-dasharray: 8 4; }
.water { fill: none; stroke: #4848b8; stroke-width: 1; }
.red, .name { font: 10px "Liberation Mono", monospace; fill: #e8283c; }
.name { fill: #222; }
.tag { font: 7px "Liberation Mono", monospace; fill: #111; }

/* dialog */
.dialog { position: absolute; right: 11px; top: 340px; width: 328px; display: flex; flex-direction: column; padding: 0 5px 5px; border: 1px solid #12404c; border-bottom-width: 2px; border-radius: 5px 5px 0 0; background: linear-gradient(#a6c0dd, #9bb7d7 12px, #bdd3ec 23px, #b9d8ef); box-shadow: 3px 4px 7px rgba(0, 0, 0, .4); }
.dlgbar { padding: 1px 0 0 0; }
.dlgbar .caption { font-size: 10px; }
.dlgbody { display: flex; flex-direction: column; gap: 9px; padding: 5px 2px 10px 14px; background: #f0f0f0; font: 10px/12px "Liberation Sans", sans-serif; color: #000; }
.fields { display: flex; gap: 10px; align-items: flex-start; }
.figure { flex: none; width: 114px; height: 121px; margin-top: 4px; background: #fff; font: 12px "Liberation Serif", serif; }
.params { flex: 1; min-width: 0; margin: 0; padding: 1px 6px 9px 11px; border: 1px solid #d8d8d8; border-radius: 3px; display: grid; grid-template-columns: 40px 1fr 13px; column-gap: 4px; row-gap: 6px; align-items: center; }
.params legend { padding: 0 1px; margin-left: -4px; }
.params label { grid-column: 1; }
.params input { width: 100%; height: 19px; padding: 0 2px; background: #fff; border: 1px solid #d2d5db; border-top-color: #a4a8b0; outline: 0; }
.params input:focus { border-color: #6ba4dc; }
.params input::selection { background: #3399ff; color: #fff; }
.spin { display: flex; flex-direction: column; justify-content: space-between; height: 15px; padding: 1px 3px; }
.spin button { width: 0; height: 0; border: 3px solid transparent; }
.spin button:first-child { border-bottom-color: #222; border-top: 0; }
.spin button:last-child { border-top-color: #222; border-bottom: 0; }
.actions { display: flex; gap: 56px; padding-left: 12px; }
.push { width: 81px; height: 21px; border: 1px solid #7c7c7c; border-radius: 3px; background: linear-gradient(#f3f3f3, #ebebeb 50%, #dcdcdc 50%, #d0d0d0); box-shadow: inset 0 0 0 1px #fafafa; }
.push.default { width: 77px; border-color: #2c86b0; box-shadow: inset 0 0 0 1px #4fc7ee; }
```
FILE: script.js
```js
const first = document.getElementById('fx');
first.focus();
first.select();
```
